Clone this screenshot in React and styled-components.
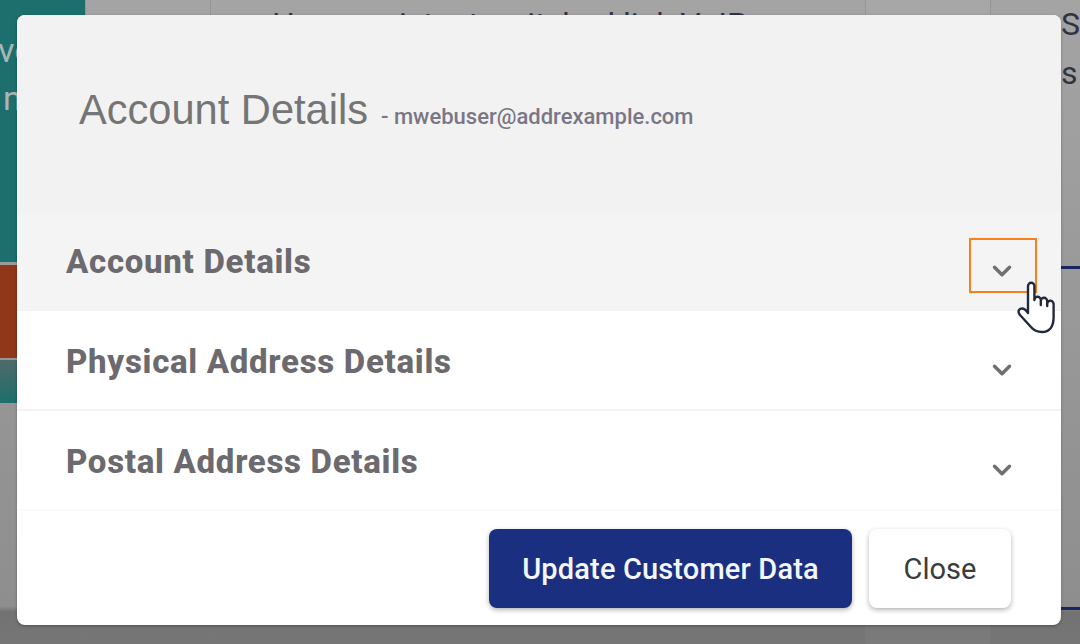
import React from 'react'
import styled, { createGlobalStyle } from 'styled-components'
import { ChevronDown } from 'lucide-react'

const GlobalStyle = createGlobalStyle`
  html, body {
    margin: 0;
    padding: 0;
    background: #9c9c9c;
    overflow: hidden;
  }
  * {
    box-sizing: border-box;
  }
`

const backdrop = 'linear-gradient(#a4a4a4 0, #8e8e8e 606px, #727272 612px, #767676 644px)'

const Page = styled.div`
  position: relative;
  width: 1080px;
  height: 644px;
  overflow: hidden;
  display: grid;
  grid-template-columns: 85px 125px 655px 125px 90px;
  background: ${backdrop};
  font-family: Roboto, sans-serif;
`

const SideCol = styled.div`
  display: flex;
  flex-direction: column;
  overflow: hidden;
`

const Teal = styled.div`
  background: #1c6f6c;
  height: 262px;
  margin-bottom: 3px;
  color: #a9b6b6;
  font-size: 34px;
  line-height: 48px;
  padding-top: 26px;
`

const TealText = styled.div`
  margin-left: ${p => p.$left}px;
`

const TealLow = styled.div`
  background: linear-gradient(#4f6a68, #1c6f6c);
  height: 43px;
`

const Orange = styled.div`
  background: #8f3718;
  height: 93px;
  margin-bottom: 2px;
`

const Col = styled.div`
  background: ${p => p.$shade ? 'rgba(255, 255, 255, 0.04)' : 'transparent'};
  border-left: 1px solid rgba(120, 120, 120, 0.35);
  color: #2f3443;
  font-size: 32px;
  line-height: 49px;
  white-space: nowrap;
  overflow: hidden;
  padding-left: ${p => p.$pad || 0}px;
  padding-top: 0;
`

const RuleStack = styled.div`
  margin-left: -${p => p.$pad}px;
`

const Rule = styled.div`
  height: 3px;
  background: #1b2560;
  margin-top: ${p => p.$top}px;
`

const Modal = styled.div`
  position: absolute;
  left: 17px;
  top: 15px;
  width: 1044px;
  height: 610px;
  background: #fff;
  border-radius: 8px;
  overflow: hidden;
  box-shadow: 0 1px 3px rgba(0, 0, 0, 0.3);
  display: flex;
  flex-direction: column;
`

const Header = styled.div`
  height: 197px;
  background: #f2f2f2;
  display: flex;
  align-items: baseline;
  padding: 69px 0 0 62px;
`

const Title = styled.h2`
  margin: 0;
  font-family: "Liberation Sans", Arial, sans-serif;
  font-weight: 400;
  font-size: 41.6px;
  line-height: 52px;
  color: #757575;
`

const Email = styled.span`
  margin-left: 13px;
  font-size: 22px;
  font-weight: 500;
  color: #7a7686;
`

const Row = styled.div`
  height: ${p => p.$h}px;
  display: flex;
  align-items: center;
  justify-content: space-between;
  padding: 0 44px 0 49px;
  background: ${p => p.$open ? '#f4f4f4' : '#fff'};
  border-bottom: 2px solid ${p => p.$last ? '#fafafa' : '#f3f3f3'};
`

const RowTitle = styled.span`
  font-size: 33px;
  font-weight: 800;
  letter-spacing: 0.7px;
  color: #6c6a6e;
  margin-top: 2px;
`

const ChevronBox = styled.div`
  position: relative;
  width: 30px;
  height: 30px;
  margin-top: 20px;
  color: #707070;
  display: flex;
  align-items: center;
  justify-content: center;
`

const Focus = styled.div`
  position: absolute;
  left: -18px;
  top: -18px;
  width: 68px;
  height: 55px;
  border: 2.5px solid #f7801a;
`

const Footer = styled.div`
  flex: 1;
  display: flex;
  justify-content: flex-end;
  gap: 17px;
  padding: 18px 50px 17px 0;
`

const Button = styled.button`
  height: 79px;
  width: ${p => p.$w}px;
  border: none;
  border-radius: 8px;
  font-family: Roboto, sans-serif;
  font-size: 29px;
  font-weight: ${p => p.$primary ? 500 : 400};
  letter-spacing: ${p => p.$primary ? '0.15px' : '0'};
  background: ${p => p.$primary ? '#1b2f80' : '#fff'};
  color: ${p => p.$primary ? '#f4f6fb' : '#3c3c3c'};
  box-shadow: 0 2px 5px rgba(0, 0, 0, 0.3);
`

const Cursor = styled.svg`
  position: absolute;
  left: 1015px;
  top: 280px;
`

const rows = ['Account Details', 'Physical Address Details', 'Postal Address Details']

export default function App() {
  return (
    <>
      <GlobalStyle />
      <Page>
        <SideCol>
          <Teal>
            <TealText $left={-2}>ve</TealText>
            <TealText $left={3}>n</TealText>
          </Teal>
          <Orange />
          <TealLow />
        </SideCol>
        <Col />
        <Col $pad={61}>Has persistent switched link VoIP</Col>
        <Col $shade />
        <Col $pad={70}>
          Se<br />s
          <RuleStack $pad={70}>
            <Rule $top={168} />
            <Rule $top={338} />
          </RuleStack>
        </Col>
        <Modal>
          <Header>
            <Title>Account Details</Title>
            <Email>- mwebuser@addrexample.com</Email>
          </Header>
          {rows.map((r, i) => (
            <Row key={r} $open={i === 0} $last={i === 2} $h={i === 0 ? 99 : 100}>
              <RowTitle>{r}</RowTitle>
              <ChevronBox>
                {i === 0 && <Focus />}
                <ChevronDown size={36} strokeWidth={2.8} />
              </ChevronBox>
            </Row>
          ))}
          <Footer>
            <Button $primary $w={363}>Update Customer Data</Button>
            <Button $w={142}>Close</Button>
          </Footer>
        </Modal>
        <Cursor width="44" height="56" viewBox="0 0 44 56">
          <path
            d="M13 6 a3.2 3.2 0 0 1 6.4 0 V20 a3 3 0 0 1 6.4 0 V25 V21 a3 3 0 0 1 6.4 0 V26 V24 a3 3 0 0 1 6.4 0 V38 Q38 52 27 52 Q20 52 16 47 L5 35 Q2 31 5 29 Q9 27 13 33 Z"
            fill="#fff"
            stroke="#23283f"
            strokeWidth="2.4"
            strokeLinejoin="round"
          />
        </Cursor>
      </Page>
    </>
  )
}
